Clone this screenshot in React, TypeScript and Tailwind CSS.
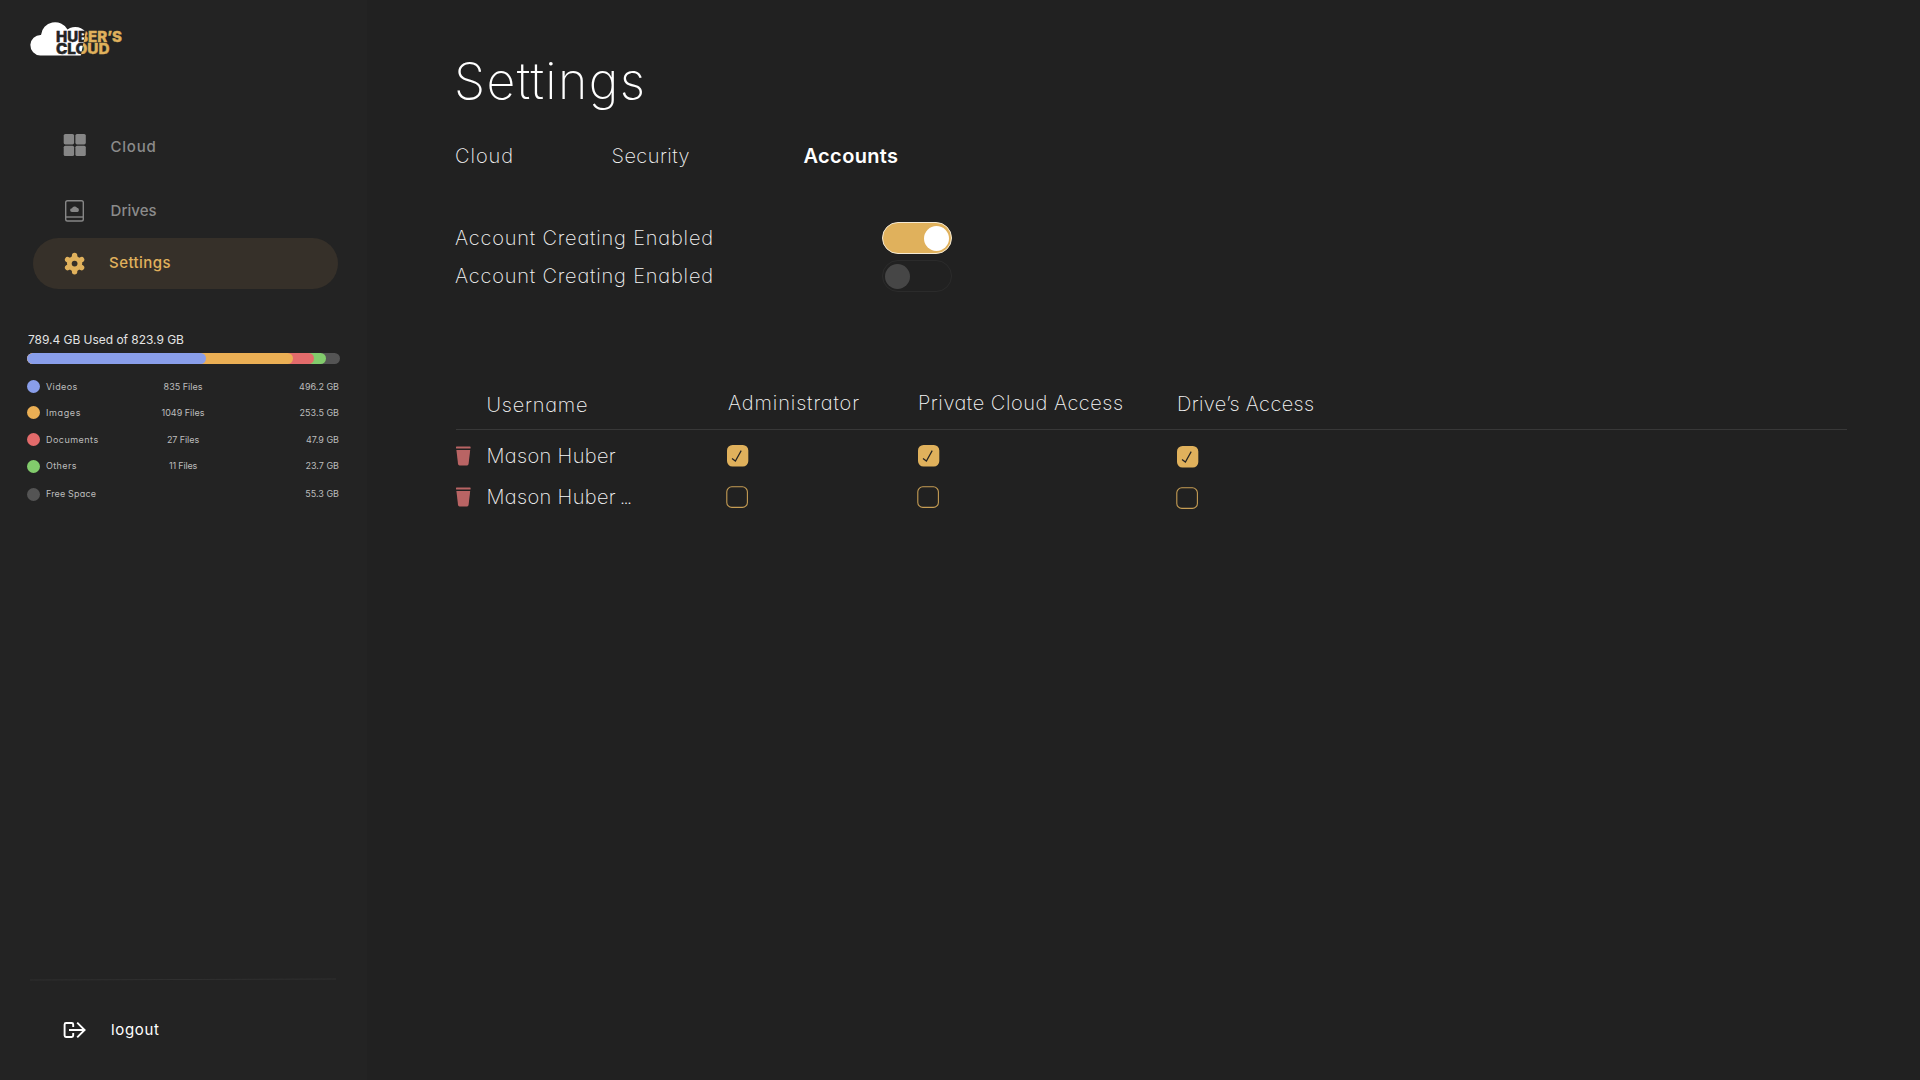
import type { ReactNode } from "react";

type TextProps = { children: ReactNode; className?: string };

function Logo() {
  return (
    <svg width="96" height="38" viewBox="0 0 96 38" className="ml-[29px] font-[Inter,sans-serif] font-extrabold">
      <defs>
        <linearGradient id="wordmark" gradientUnits="userSpaceOnUse" x1="54" y1="23" x2="54.8" y2="23.16">
          <stop offset="0" stopColor="#232323" />
          <stop offset="1" stopColor="#e0b15c" />
        </linearGradient>
      </defs>
      <path
        d="M11.3 35.5A10.3 10.3 0 1 1 12 14.9A14.2 14.2 0 0 1 38.5 9.4A13.5 13.5 0 0 1 58 14L56 14L54.4 23L51.8 35.5Z"
        fill="#fff"
      />
      <g fill="url(#wordmark)" stroke="url(#wordmark)" strokeWidth="0.4">
        <text x="27" y="22.3" fontSize="14.4" textLength="66" lengthAdjust="spacingAndGlyphs">HUBER’S</text>
        <text x="27" y="33.9" fontSize="14.4" textLength="53.5" lengthAdjust="spacingAndGlyphs">CLOUD</text>
      </g>
    </svg>
  );
}

function GridIcon() {
  return (
    <svg width="24" height="24" viewBox="0 0 24 24" fill="#868686">
      <rect x="0.7" y="1" width="10.4" height="10.4" rx="1.6" />
      <rect x="12.4" y="1" width="10.4" height="10.4" rx="1.6" />
      <rect x="0.7" y="12.7" width="10.4" height="10.4" rx="1.6" />
      <rect x="12.4" y="12.7" width="10.4" height="10.4" rx="1.6" />
    </svg>
  );
}

function DriveIcon() {
  return (
    <svg width="24" height="24" viewBox="0 0 24 24" fill="none" stroke="#868686" strokeWidth="1.4">
      <rect x="2.7" y="1.8" width="17.6" height="20.2" rx="1.8" />
      <path d="M3 18h17.2" />
      <path
        d="M9 13a1.9 1.9 0 0 1 0-3.8a2.8 2.8 0 0 1 5-.4a2.2 2.2 0 0 1 .6 4.2Z"
        fill="#868686"
        stroke="none"
      />
    </svg>
  );
}

function GearIcon() {
  return (
    <svg width="24" height="24" viewBox="0 0 24 24">
      <g stroke="#e0b15c" strokeWidth="5.4" strokeLinecap="round">
        <path d="M11.6 3.5V19.7M4.6 7.55L18.6 15.65M4.6 15.65L18.6 7.55" />
      </g>
      <circle cx="11.6" cy="11.6" r="7.6" fill="#e0b15c" />
      <circle cx="11.6" cy="11.6" r="2.9" fill="#363029" />
    </svg>
  );
}

function LogoutIcon() {
  return (
    <svg width="24" height="18" viewBox="0 0 24 18" fill="none" stroke="#fff" strokeWidth="1.9">
      <path d="M10.2 6V3.4Q10.2 2 8.8 2H3Q1.6 2 1.6 3.4V14.6Q1.6 16 3 16H8.8Q10.2 16 10.2 14.6V12" />
      <path d="M6 9H21.6M14.2 1.6L21.6 9L14.2 16.4" />
    </svg>
  );
}

function TrashIcon() {
  return (
    <svg width="15" height="20" viewBox="0 0 15 20" fill="#b96464">
      <rect x="0" y="0.4" width="14.6" height="2.1" rx="0.6" />
      <path d="M.4 4H14.2L12.6 17.8Q12.4 19.4 11.1 19.4H3.5Q2.2 19.4 2 17.8Z" />
    </svg>
  );
}

function Checkbox({ checked }: { checked: boolean }) {
  return checked ? (
    <svg width="22" height="22" viewBox="0 0 22 22" className="ml-px">
      <rect x="0" y="0" width="21.3" height="21.5" rx="5.5" fill="#e0b15c" />
      <path d="M5 13.4L8.4 16L14.2 5.6" fill="none" stroke="#232323" strokeWidth="1.2" />
    </svg>
  ) : (
    <svg width="22" height="22" viewBox="0 0 22 22">
      <rect x="0.8" y="0.8" width="20.6" height="20.6" rx="5" fill="none" stroke="#c69d54" strokeWidth="1.1" />
    </svg>
  );
}

function NavLabel({ children, className = "" }: TextProps) {
  return <span className={`text-[15px] leading-6 font-[450] ${className}`}>{children}</span>;
}

const legend = [
  { name: "Videos", files: "835 Files", size: "496.2 GB", dot: "bg-[#899eea]", track: "tracking-[0.043em]", fileTrack: "" },
  { name: "Images", files: "1049 Files", size: "253.5 GB", dot: "bg-[#ebaf54]", track: "tracking-[0.07em]", fileTrack: "" },
  { name: "Documents", files: "27 Files", size: "47.9 GB", dot: "bg-[#e36b6b]", track: "tracking-[0.052em]", fileTrack: "tracking-[-0.009em]" },
  { name: "Others", files: "11 Files", size: "23.7 GB", dot: "bg-[#82cb6c]", track: "tracking-[0.042em]", fileTrack: "tracking-[-0.02em]" },
  { name: "Free Space", files: "", size: "55.3 GB", dot: "bg-[#545454]", track: "tracking-[0.018em]", fileTrack: "" },
];

function Storage() {
  return (
    <section className="mt-[41px] ml-[27px] w-[313px]">
      <h2 className="pl-px text-[12px] leading-5 tracking-[-0.003em] text-[#e4e4e4]">789.4 GB Used of 823.9 GB</h2>
      <div className="mt-[3px] flex h-[11px] overflow-hidden rounded-full bg-[#545454]">
        <div className="w-[298.5px] rounded-full bg-[#82cb6c]">
          <div className="h-full w-[287px] rounded-full bg-[#e36b6b]">
            <div className="h-full w-[266px] rounded-full bg-[#ebaf54]">
              <div className="h-full w-[179px] rounded-full bg-[#899eea]" />
            </div>
          </div>
        </div>
      </div>
      <ul className="mt-[9px]">
        {legend.map((l) => (
          <li
            key={l.name}
            className="grid h-[26.6px] w-[312px] grid-cols-[19px_104px_66px_1fr] items-center text-[9px] text-[#bdbdbd] last:mt-[1.5px]"
          >
            <span className={`size-[13px] rounded-full ${l.dot}`} />
            <span className={l.track}>{l.name}</span>
            <span className={`text-center ${l.fileTrack}`}>{l.files}</span>
            <span className="text-right">{l.size}</span>
          </li>
        ))}
      </ul>
    </section>
  );
}

function Sidebar() {
  return (
    <aside className="flex w-[367px] shrink-0 flex-col bg-[#232323] pt-5">
      <Logo />
      <nav className="mt-[67px] ml-[33px] w-[305px] text-[#8b8b8b]">
        <div className="flex h-10 items-center gap-[23.5px] pl-[30px]">
          <GridIcon />
          <NavLabel className="mt-[3px] tracking-[0.052em]">Cloud</NavLabel>
        </div>
        <div className="mt-[26px] flex h-10 items-center gap-[23.5px] pl-[30px]">
          <DriveIcon />
          <NavLabel className="tracking-[0.005em]">Drives</NavLabel>
        </div>
        <div className="mt-[7px] flex h-[51px] items-center gap-[22px] rounded-full bg-[#363029] pl-[30px] text-[#e0b15c]">
          <GearIcon />
          <NavLabel className="-mt-[2px] tracking-[0.03em]">Settings</NavLabel>
        </div>
      </nav>
      <Storage />
      <div className="mt-auto ml-[30px] h-px w-[306px] -rotate-[0.2deg] bg-[#303030]" />
      <div className="mt-[38px] mb-[38px] ml-[63px] flex h-[24px] items-center gap-[24px] text-white">
        <LogoutIcon />
        <span className="text-[15px] leading-6 tracking-[0.045em]">logout</span>
      </div>
    </aside>
  );
}

function Toggle({ on }: { on: boolean }) {
  return on ? (
    <span className="flex h-[32px] w-[70px] items-center justify-end rounded-full border border-[#f5ead4] bg-[#e0b15c] pr-[2px]">
      <span className="size-[25px] rounded-full bg-white" />
    </span>
  ) : (
    <span className="flex h-[32px] w-[70px] items-center rounded-full border border-[#2b2b2b] pl-[2px]">
      <span className="size-[25px] rounded-full bg-[#464646]" />
    </span>
  );
}

function ToggleRow({ on }: { on: boolean }) {
  return (
    <div className="flex h-[38px] w-[497px] items-center justify-between">
      <span className="tracking-[0.0405em]">Account Creating Enabled</span>
      <Toggle on={on} />
    </div>
  );
}

function UserRow({ checked, suffix }: { checked: boolean; suffix?: string }) {
  return (
    <div className="grid h-[41.5px] grid-cols-[271px_191px_259px_1fr] items-center">
      <div className="flex items-center gap-[15.5px] pl-px">
        <TrashIcon />
        <span className="tracking-[0.018em]">
          Mason Huber{suffix && <span className="tracking-[-0.1em]"> {suffix}</span>}
        </span>
      </div>
      <Checkbox checked={checked} />
      <Checkbox checked={checked} />
      <div className="pt-[2px]">
        <Checkbox checked={checked} />
      </div>
    </div>
  );
}

export default function App() {
  return (
    <div className="flex h-[1080px] w-[1920px] overflow-hidden bg-[#212121] font-[Inter,sans-serif] [font-feature-settings:'cv11']">
      <Sidebar />
      <main className="flex-1 pt-[51px] pl-[88px] text-[20px] leading-6 font-extralight text-[#f4f4f4]">
        <h1 className="-ml-px text-[50px] leading-[60px] tracking-[0.028em] text-white">Settings</h1>
        <div className="mt-[32px] grid h-[25px] grid-cols-[156.5px_192px_1fr] items-center">
          <span className="tracking-[0.048em]">Cloud</span>
          <span className="tracking-[0.022em]">Security</span>
          <span className="font-semibold tracking-[0.018em] text-white">Accounts</span>
        </div>
        <section className="mt-[51px]">
          <ToggleRow on />
          <ToggleRow on={false} />
        </section>
        <section className="mt-[96px] w-[1392px]">
          <div className="ml-px grid h-[39px] w-[1391px] grid-cols-[272px_191px_259px_1fr] items-start border-b border-[#383838]">
            <span className="pt-[2px] pl-[30.5px] tracking-[0.039em]">Username</span>
            <span className="tracking-[0.044em]">Administrator</span>
            <span className="-ml-px tracking-[0.0265em]">Private Cloud Access</span>
            <span className="-ml-px pt-px tracking-[0.017em]">Drive’s Access</span>
          </div>
          <div className="pt-[5px]">
            <UserRow checked />
            <UserRow checked={false} suffix="..." />
          </div>
        </section>
      </main>
    </div>
  );
}
